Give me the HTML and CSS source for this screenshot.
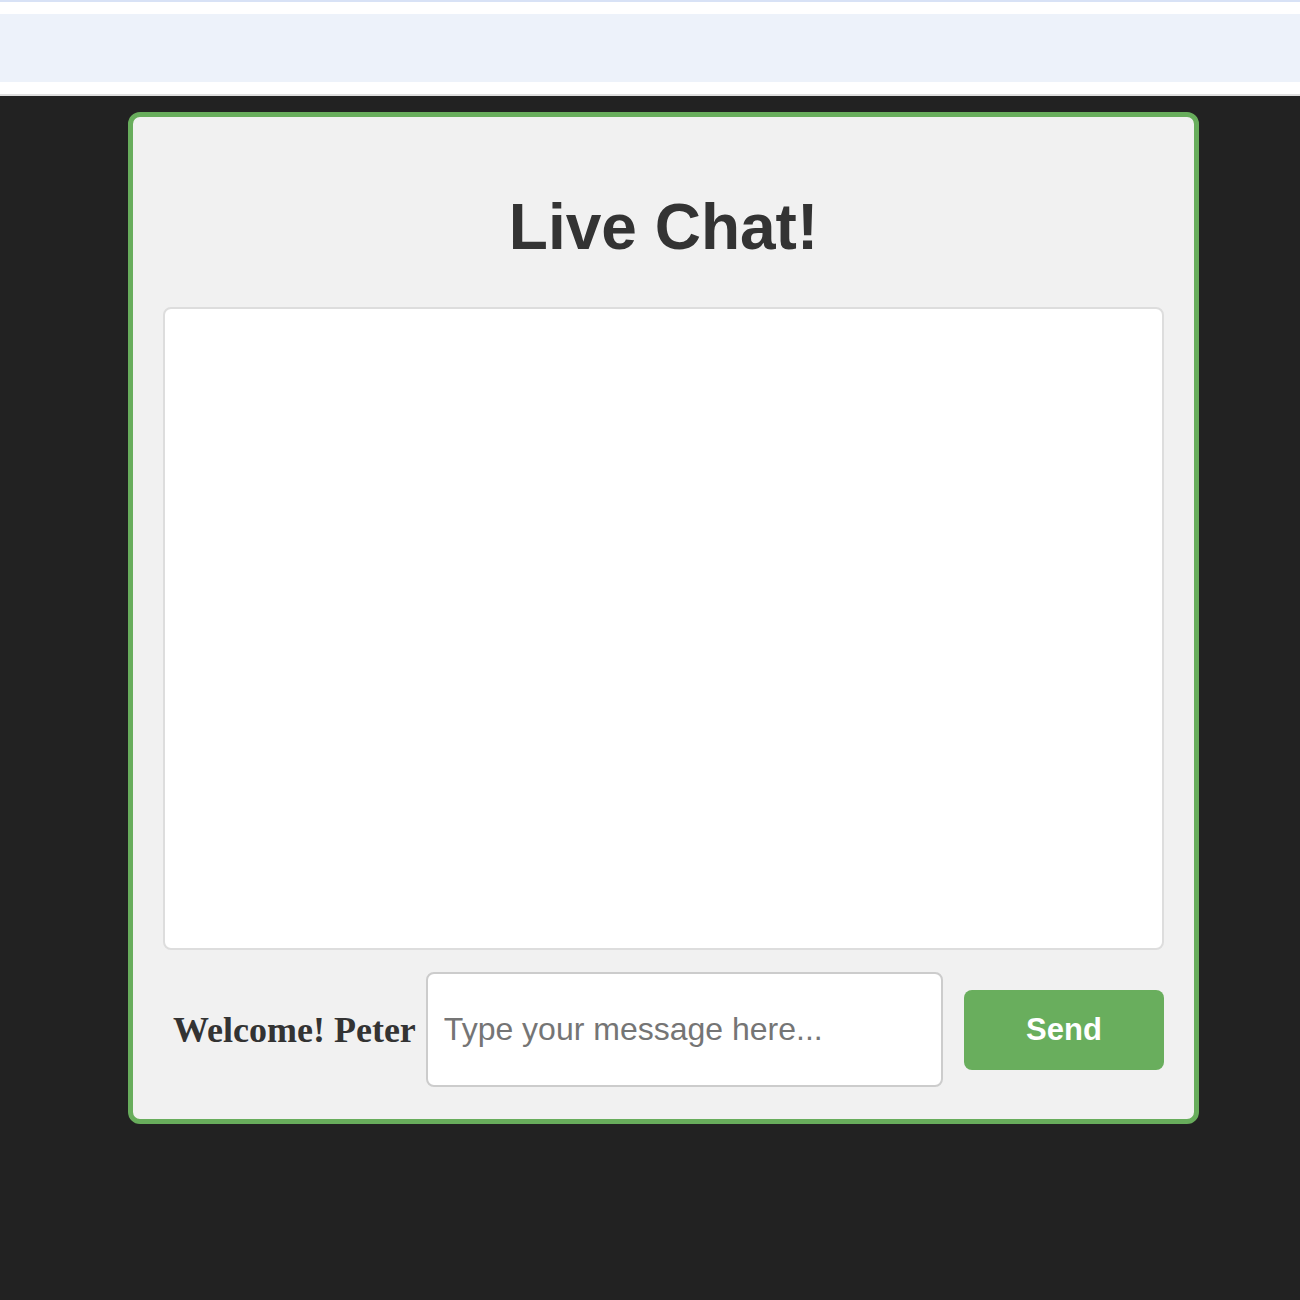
FILE: index.html
```html
<!DOCTYPE html>
<html lang="en">
<head>
<meta charset="utf-8">
<title>Live Chat</title>
<link rel="stylesheet" href="styles.css">
</head>
<body>
<header class="topbar">
  <div class="topbar-line"></div>
  <div class="topbar-band"></div>
</header>
<main class="page">
  <section class="chat-card">
    <h1 class="chat-title">Live Chat!</h1>
    <div class="chat-box"></div>
    <form class="chat-form" onsubmit="return false;">
      <label class="welcome" for="msg">Welcome! Peter</label>
      <input id="msg" class="msg-input" type="text" placeholder="Type your message here...">
      <button class="send-btn" type="submit">Send</button>
    </form>
  </section>
</main>
</body>
</html>
```
FILE: styles.css
```css
html, body {
  margin: 0;
  padding: 0;
}
body {
  background: #222222;
  font-family: "Liberation Serif", "Times New Roman", serif;
  min-height: 1300px;
}
.topbar {
  background: #ffffff;
  height: 94px;
  border-bottom: 2px solid #dedede;
  display: flex;
  flex-direction: column;
}
.topbar-line {
  height: 2px;
  background: #d8e2f6;
}
.topbar-band {
  margin-top: 12px;
  height: 68px;
  background: #edf2fa;
}
.page {
  padding-top: 16px;
  padding-left: 128px;
}
.chat-card {
  box-sizing: border-box;
  width: 1071px;
  background: #f1f1f1;
  border: 5px solid #68ad5c;
  border-radius: 12px;
  padding: 30px 30px 32px;
}
.chat-title {
  font-family: "Liberation Sans", Arial, sans-serif;
  font-weight: bold;
  font-size: 64px;
  color: #333333;
  text-align: center;
  margin: 43px 0 43px;
}
.chat-box {
  box-sizing: border-box;
  height: 643px;
  background: #ffffff;
  border: 2px solid #dddddd;
  border-radius: 8px;
}
.chat-form {
  display: flex;
  align-items: center;
  margin-top: 22px;
  padding-left: 10px;
}
.welcome {
  font-family: "Liberation Serif", "Times New Roman", serif;
  font-weight: bold;
  font-size: 36px;
  color: #333333;
  margin-right: 10px;
  white-space: nowrap;
}
.msg-input {
  box-sizing: border-box;
  flex: 1;
  min-width: 0;
  height: 115px;
  border: 2px solid #cccccc;
  border-radius: 8px;
  background: #ffffff;
  padding: 0 16px;
  font-family: "Liberation Sans", Arial, sans-serif;
  font-size: 32px;
  color: #333333;
  outline: none;
}
.msg-input::placeholder {
  color: #757575;
}
.send-btn {
  box-sizing: border-box;
  width: 200px;
  height: 80px;
  margin-left: 21px;
  border: none;
  border-radius: 8px;
  background: #69ae5d;
  color: #ffffff;
  font-family: "Liberation Sans", Arial, sans-serif;
  font-weight: bold;
  font-size: 31px;
  cursor: pointer;
}
```
